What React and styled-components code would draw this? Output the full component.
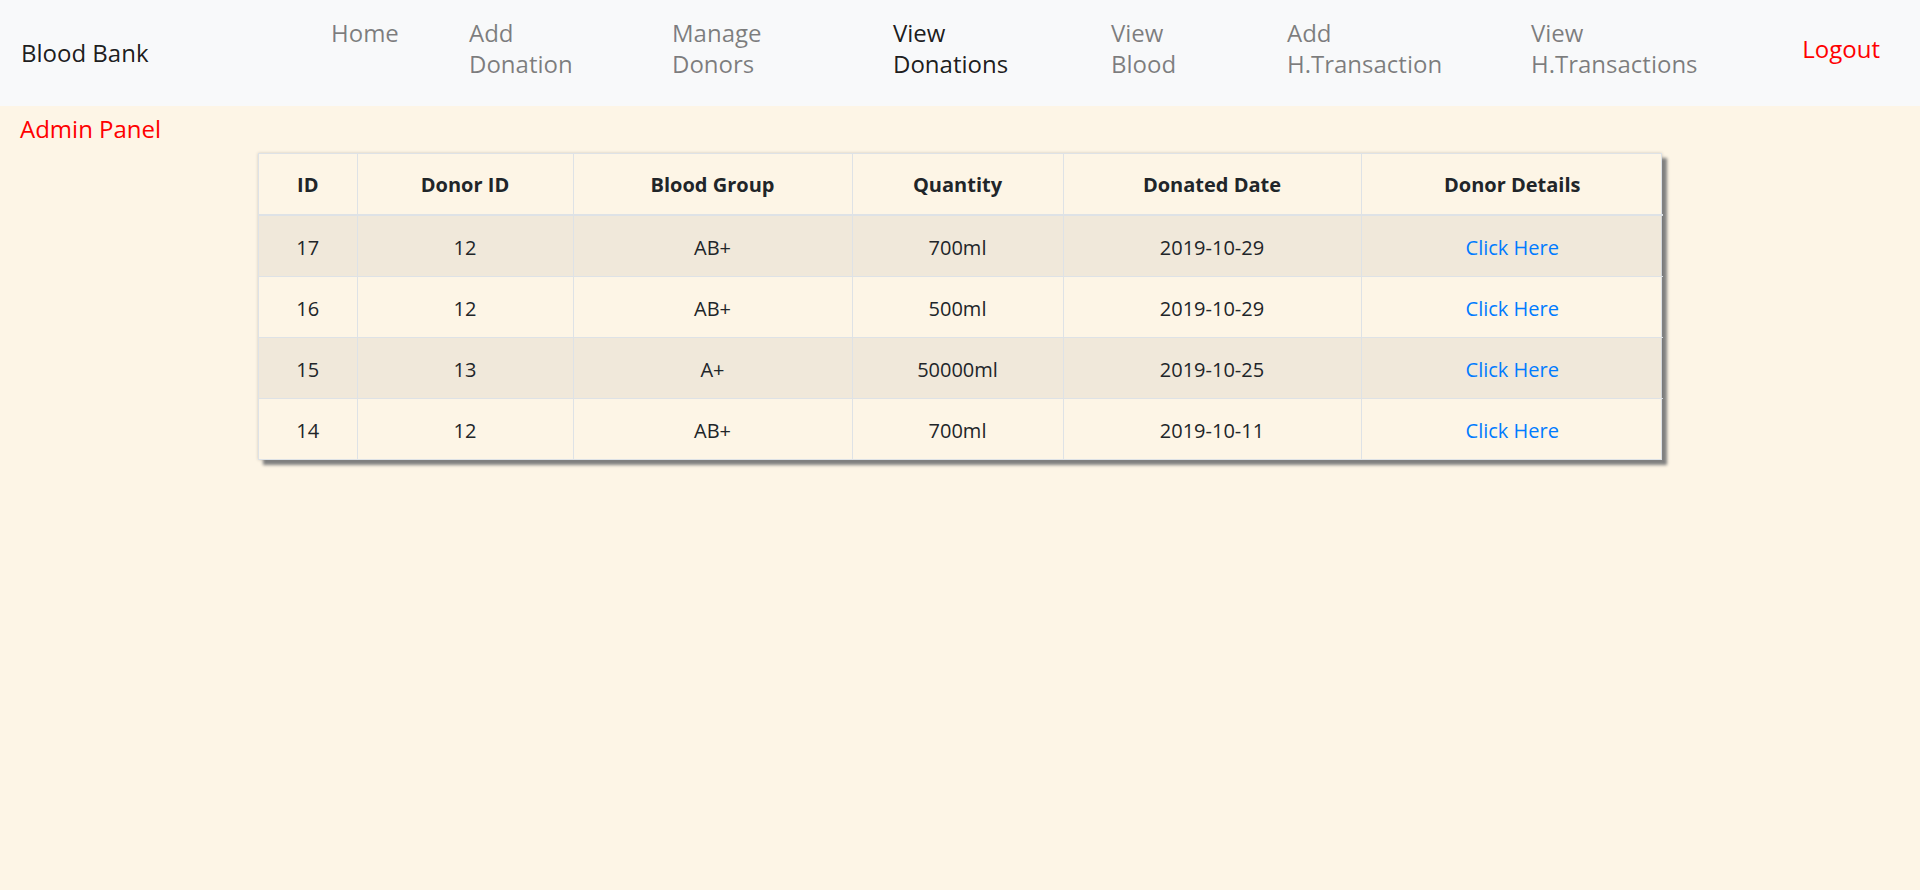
import React from "react";
import styled, { createGlobalStyle } from "styled-components";

const FONT = `"Open Sans", "Noto Sans", "DejaVu Sans", sans-serif`;

const GlobalStyle = createGlobalStyle`
  html, body {
    margin: 0;
    padding: 0;
  }
  body {
    background: #fdf5e6;
    font-family: ${FONT};
    font-size: 20px;
    line-height: 1.5;
    color: #212529;
    min-height: 890px;
  }
`;

const NAV_ITEMS = [
  { id: "home", lines: ["Home"], width: 138 },
  { id: "add-donation", lines: ["Add", "Donation"], width: 203 },
  { id: "manage-donors", lines: ["Manage", "Donors"], width: 221 },
  { id: "view-donations", lines: ["View", "Donations"], width: 218, active: true },
  { id: "view-blood", lines: ["View", "Blood"], width: 176 },
  { id: "add-trans", lines: ["Add", "H.Transaction"], width: 244 },
  { id: "view-trans", lines: ["View", "H.Transactions"] },
];

const COLUMNS = [
  { key: "id", title: "ID", width: 98 },
  { key: "donorId", title: "Donor ID", width: 216 },
  { key: "group", title: "Blood Group", width: 279 },
  { key: "quantity", title: "Quantity", width: 211 },
  { key: "date", title: "Donated Date", width: 298 },
  { key: "details", title: "Donor Details", width: 302 },
];

const DONATIONS = [
  { id: 17, donorId: 12, group: "AB+", quantity: "700ml", date: "2019-10-29" },
  { id: 16, donorId: 12, group: "AB+", quantity: "500ml", date: "2019-10-29" },
  { id: 15, donorId: 13, group: "A+", quantity: "50000ml", date: "2019-10-25" },
  { id: 14, donorId: 12, group: "AB+", quantity: "700ml", date: "2019-10-11" },
];

const Navbar = styled.nav`
  display: flex;
  align-items: flex-start;
  height: 106px;
  padding: 0 40px 0 21px;
  background: #f8f9fa;
  box-sizing: border-box;
`;

const Brand = styled.a`
  width: 310px;
  flex-shrink: 0;
  padding-top: 38px;
  font-size: 24px;
  line-height: 30px;
  color: rgba(0, 0, 0, 0.9);
  text-decoration: none;
`;

const NavList = styled.ul`
  display: flex;
  list-style: none;
  margin: 0;
  padding: 17px 0 0;
`;

const NavItem = styled.li`
  width: ${({ $width }) => ($width ? `${$width}px` : "auto")};
  flex-shrink: 0;
`;

const NavLink = styled.a`
  display: block;
  font-size: 24px;
  line-height: 31px;
  color: ${({ $active }) => ($active ? "rgba(0, 0, 0, 0.9)" : "rgba(0, 0, 0, 0.5)")};
  text-decoration: none;
  cursor: pointer;
`;

const Logout = styled.a`
  margin-left: auto;
  padding-top: 33px;
  font-size: 24px;
  line-height: 31px;
  color: #ff0000;
  text-decoration: none;
  cursor: pointer;
`;

const PanelTitle = styled.h5`
  margin: 0;
  padding: 8px 20px 0;
  font-size: 24px;
  font-weight: 400;
  line-height: 30px;
  color: #ff0000;
`;

const TableWrapper = styled.div`
  width: 1404px;
  margin: 9px auto 0;
  border: 1px solid #dee2e6;
  box-sizing: border-box;
  box-shadow: 5px 5px 3px #808080, 0 0 3px rgba(0, 0, 0, 0.18);
`;

const Table = styled.table`
  width: 100%;
  table-layout: fixed;
  border-collapse: collapse;
  border-style: hidden;
  color: #212529;
`;

const HeadCell = styled.th`
  width: ${({ $width }) => $width}px;
  padding: 16px 15px 14px;
  border: 1px solid #dee2e6;
  border-bottom-width: 2px;
  font-weight: 700;
  line-height: 30px;
  text-align: center;
  box-sizing: border-box;
`;

const Row = styled.tr`
  background: ${({ $striped }) => ($striped ? "rgba(0, 0, 0, 0.05)" : "transparent")};
`;

const Cell = styled.td`
  padding: 16.5px 15px 13.5px;
  border: 1px solid #dee2e6;
  line-height: 30px;
  text-align: center;
`;

const DetailsLink = styled.a`
  color: #007bff;
  text-decoration: none;
  cursor: pointer;
`;

const App = () => (
  <>
    <GlobalStyle />
    <Navbar>
      <Brand>Blood Bank</Brand>
      <NavList>
        {NAV_ITEMS.map((item) => (
          <NavItem key={item.id} $width={item.width}>
            <NavLink $active={item.active}>
              {item.lines.map((line, i) => (
                <React.Fragment key={line}>
                  {i > 0 && <br />}
                  {line}
                </React.Fragment>
              ))}
            </NavLink>
          </NavItem>
        ))}
      </NavList>
      <Logout>Logout</Logout>
    </Navbar>
    <PanelTitle>Admin Panel</PanelTitle>
    <TableWrapper>
      <Table>
        <thead>
          <tr>
            {COLUMNS.map((col) => (
              <HeadCell key={col.key} $width={col.width}>
                {col.title}
              </HeadCell>
            ))}
          </tr>
        </thead>
        <tbody>
          {DONATIONS.map((donation, index) => (
            <Row key={donation.id} $striped={index % 2 === 0}>
              <Cell>{donation.id}</Cell>
              <Cell>{donation.donorId}</Cell>
              <Cell>{donation.group}</Cell>
              <Cell>{donation.quantity}</Cell>
              <Cell>{donation.date}</Cell>
              <Cell>
                <DetailsLink>Click Here</DetailsLink>
              </Cell>
            </Row>
          ))}
        </tbody>
      </Table>
    </TableWrapper>
  </>
);

export default App;
